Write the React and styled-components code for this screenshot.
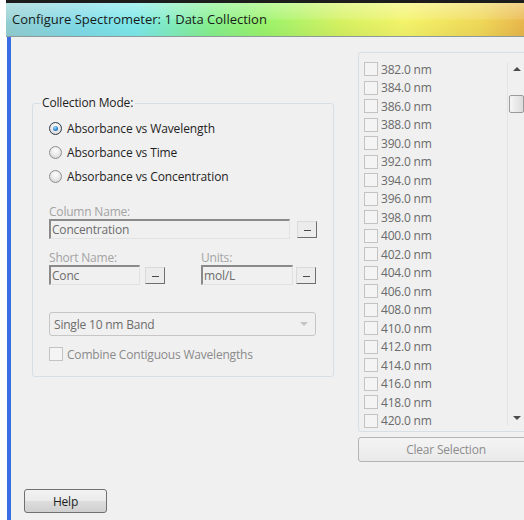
import React from 'react';
import styled, {createGlobalStyle} from "styled-components";

const Global = createGlobalStyle`
    html, body {
        margin: 0;
        padding: 0;
        background: #ffffff;
        overflow: hidden;
    }
    body {
        font-family: "Open Sans", "Noto Sans", sans-serif;
        font-size: 12px;
    }
`

const Window = styled.div`
    margin-left: 6px;
    width: 540px;
    height: 520px;
    border-top: 3px solid #1c1c1c;
    display: flex;
    flex-direction: column;
`

const TitleBar = styled.div`
    height: 34px;
    display: flex;
    align-items: center;
    padding-left: 6px;
    padding-bottom: 2px;
    box-sizing: border-box;
    border-bottom: 1px solid #8c9c9c;
    background:
        linear-gradient(180deg, rgba(255,255,255,0.35) 0%, rgba(255,255,255,0.12) 48%, rgba(0,0,0,0) 52%, rgba(0,0,0,0.04) 100%),
        linear-gradient(90deg, #93cfd2 0%, #7fdbe8 14%, #7de9ea 24%, #86f08e 38%, #9cf46c 48%, #d6f262 62%, #f4f46a 74%, #f0d858 88%, #e6a646 100%);
`

const Title = styled.span`
    font-size: 13px;
    color: #1a1a1a;
`

const Body = styled.div`
    flex: 1;
    background: #f0f0f0;
    border-left: 4px solid #3a6ce4;
    margin-left: 1px;
    display: flex;
    flex-direction: column;
    overflow: hidden;
`

const Columns = styled.div`
    display: flex;
`

const LeftCol = styled.div`
    width: 326px;
    padding: 58px 0 0 21px;
`

const RightCol = styled.div`
    width: 176px;
    padding-top: 15px;
    display: flex;
    flex-direction: column;
    gap: 5px;
`

const Group = styled.fieldset`
    margin: 0;
    width: 302px;
    box-sizing: border-box;
    border: 1px solid #d5dfe5;
    border-radius: 3px;
    padding: 0 8px 14px 8px;
`

const Legend = styled.legend`
    padding: 0 2px 0 1px;
    line-height: 16px;
    color: #1e1e1e;
    letter-spacing: -0.15px;
`

const GroupInner = styled.div`
    padding-left: 8px;
    display: flex;
    flex-direction: column;
`

const RadioList = styled.div`
    margin-top: 5px;
    display: flex;
    flex-direction: column;
`

const RadioRow = styled.label`
    height: 24px;
    display: flex;
    align-items: center;
    gap: 5px;
    color: #1e1e1e;
    letter-spacing: -0.1px;
`

const RadioDot = styled.span`
    width: 11px;
    height: 11px;
    border-radius: 50%;
    border: 1px solid ${p => p.$on ? '#2c3a48' : '#8f8f8f'};
    background: radial-gradient(circle at 50% 35%, #ffffff 0%, #e6e6e6 55%, #c9c9c9 100%);
    display: flex;
    align-items: center;
    justify-content: center;

    &::after {
        content: '';
        width: 5px;
        height: 5px;
        border-radius: 50%;
        background: ${p => p.$on ? 'radial-gradient(circle at 40% 35%, #a6e0ff 0%, #2f86cc 55%, #0f4f8a 100%)' : 'transparent'};
    }
`

const FieldLabel = styled.div`
    line-height: 14px;
    color: #a3a3a3;
    letter-spacing: -0.2px;
    margin-top: ${p => p.$top || 0}px;
`

const FieldRow = styled.div`
    display: flex;
    align-items: center;
    gap: ${p => p.$gap || 5}px;
`

const FieldCell = styled.div`
    display: flex;
    flex-direction: column;
    width: ${p => p.$w}px;
`

const TextBox = styled.div`
    width: ${p => p.$w}px;
    height: 20px;
    box-sizing: border-box;
    border-top: 2px solid #8a8a8a;
    border-left: 2px solid #8a8a8a;
    border-right: 1px solid #e2e2e2;
    border-bottom: 1px solid #e2e2e2;
    padding-left: 1px;
    display: flex;
    align-items: center;
    color: #6d6d6d;
    letter-spacing: -0.2px;
`

const SmallButton = styled.div`
    width: 20px;
    height: 17px;
    box-sizing: border-box;
    border: 1px solid #dadada;
    border-right-color: #6e6e6e;
    border-bottom-color: #6e6e6e;
    background: #ececec;
    display: flex;
    align-items: center;
    justify-content: center;
    margin-top: 1px;

    &::after {
        content: '';
        width: 7px;
        height: 1px;
        margin-top: 2px;
        background: #4a4a4a;
    }
`

const Select = styled.div`
    margin-top: 27px;
    width: 267px;
    height: 24px;
    box-sizing: border-box;
    border: 1px solid #c6c6c6;
    border-radius: 3px;
    background: #f0f0f0;
    display: flex;
    align-items: center;
    justify-content: space-between;
    padding: 0 7px 0 4px;
    color: #6d6d6d;
    letter-spacing: -0.2px;
`

const Caret = styled.span`
    width: 0;
    height: 0;
    border-left: 4px solid transparent;
    border-right: 4px solid transparent;
    border-top: 4px solid #c4c4c4;
`

const CheckRow = styled.label`
    margin-top: 10px;
    height: 16px;
    display: flex;
    align-items: center;
    gap: 4px;
    color: #8a8a8a;
    letter-spacing: -0.2px;
`

const CheckBox = styled.span`
    width: 14px;
    height: 14px;
    box-sizing: border-box;
    border: 1px solid #c3c3c3;
    background: #f4f4f4;
    flex: none;
`

const ListFrame = styled.div`
    height: 380px;
    box-sizing: border-box;
    border: 1px solid #d5dfe5;
    border-radius: 3px;
    padding-top: 7px;
    display: flex;
`

const ListItems = styled.div`
    width: 143px;
    padding-left: 5px;
    display: flex;
    flex-direction: column;
`

const ListItem = styled.label`
    height: 18.5px;
    display: flex;
    align-items: center;
    gap: 3px;
    color: #6a6a6a;
    letter-spacing: -0.2px;
`

const ScrollBar = styled.div`
    width: 18px;
    height: 364px;
    margin-top: 2px;
    box-sizing: border-box;
    border-left: 1px solid #e4e4e4;
    display: flex;
    flex-direction: column;
    align-items: center;
`

const Arrow = styled.span`
    width: 0;
    height: 0;
    border-left: 4px solid transparent;
    border-right: 4px solid transparent;
    ${p => p.$down
        ? 'border-top: 4px solid #4c4c4c; margin-top: auto; margin-bottom: 6px;'
        : 'border-bottom: 4px solid #4c4c4c; margin-top: 5px;'}
`

const Thumb = styled.div`
    margin-top: 24px;
    width: 15px;
    height: 18px;
    box-sizing: border-box;
    border: 1px solid #9a9a9a;
    border-radius: 2px;
    background: linear-gradient(90deg, #f6f6f6 0%, #e9e9e9 50%, #dcdcdc 100%);
`

const WideButton = styled.div`
    height: 25px;
    box-sizing: border-box;
    border: 1px solid #b4b4b4;
    border-radius: 3px;
    background: linear-gradient(180deg, #f4f4f4 0%, #efefef 50%, #e9e9e9 100%);
    display: flex;
    align-items: center;
    justify-content: center;
    color: #8d8d8d;
    letter-spacing: -0.2px;
`

const Footer = styled.div`
    padding: 27px 0 0 13px;
`

const HelpButton = styled.div`
    width: 83px;
    height: 24px;
    box-sizing: border-box;
    border: 1px solid #707070;
    border-radius: 3px;
    background: linear-gradient(180deg, #f3f3f3 0%, #ebebeb 48%, #dddddd 52%, #cfcfcf 100%);
    display: flex;
    align-items: center;
    justify-content: center;
    color: #1e1e1e;
    letter-spacing: -0.2px;
`

const modes = [
    {id: 'wave', label: 'Absorbance vs Wavelength', on: true},
    {id: 'time', label: 'Absorbance vs Time'},
    {id: 'conc', label: 'Absorbance vs Concentration'},
]

const wavelengths = Array.from({length: 20}, (_, i) => (382 + i * 2).toFixed(1))

const App = () => {
    return (
        <>
            <Global/>
            <Window>
                <TitleBar>
                    <Title>Configure Spectrometer: 1 Data Collection</Title>
                </TitleBar>
                <Body>
                    <Columns>
                        <LeftCol>
                            <Group>
                                <Legend>Collection Mode:</Legend>
                                <GroupInner>
                                    <RadioList>
                                        {modes.map(m => (
                                            <RadioRow key={m.id}>
                                                <RadioDot $on={m.on}/>
                                                {m.label}
                                            </RadioRow>
                                        ))}
                                    </RadioList>

                                    <FieldLabel $top={17}>Column Name:</FieldLabel>
                                    <FieldRow $gap={7}>
                                        <TextBox $w={241}>Concentration</TextBox>
                                        <SmallButton/>
                                    </FieldRow>

                                    <FieldRow $gap={36}>
                                        <FieldCell $w={116}>
                                            <FieldLabel $top={12}>Short Name:</FieldLabel>
                                            <FieldRow $gap={5}>
                                                <TextBox $w={91}>Conc</TextBox>
                                                <SmallButton/>
                                            </FieldRow>
                                        </FieldCell>
                                        <FieldCell $w={115}>
                                            <FieldLabel $top={12}>Units:</FieldLabel>
                                            <FieldRow $gap={3}>
                                                <TextBox $w={92}>mol/L</TextBox>
                                                <SmallButton/>
                                            </FieldRow>
                                        </FieldCell>
                                    </FieldRow>

                                    <Select>
                                        Single 10 nm Band
                                        <Caret/>
                                    </Select>

                                    <CheckRow>
                                        <CheckBox/>
                                        Combine Contiguous Wavelengths
                                    </CheckRow>
                                </GroupInner>
                            </Group>
                        </LeftCol>

                        <RightCol>
                            <ListFrame>
                                <ListItems>
                                    {wavelengths.map(w => (
                                        <ListItem key={w}>
                                            <CheckBox/>
                                            {w} nm
                                        </ListItem>
                                    ))}
                                </ListItems>
                                <ScrollBar>
                                    <Arrow/>
                                    <Thumb/>
                                    <Arrow $down/>
                                </ScrollBar>
                            </ListFrame>
                            <WideButton>Clear Selection</WideButton>
                        </RightCol>
                    </Columns>
                    <Footer>
                        <HelpButton>Help</HelpButton>
                    </Footer>
                </Body>
            </Window>
        </>
    );
};

export default App;
